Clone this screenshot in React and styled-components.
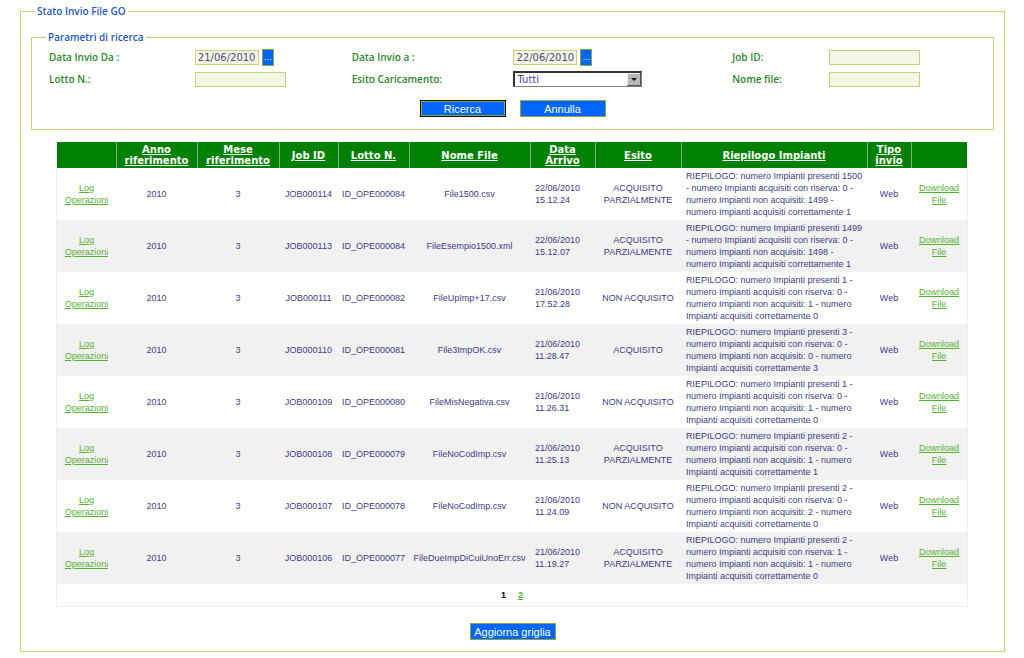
import styled, { createGlobalStyle } from "styled-components";

const GlobalStyle = createGlobalStyle`
  * {
    box-sizing: border-box;
  }
  body {
    margin: 0;
    background-color: #fffffe;
    font-family: "Liberation Sans", Arial, sans-serif;
    color: #3c3c86;
  }
`;

const Page = styled.main`
  padding: 4px 19px 0 20px;
`;

const Fieldset = styled.fieldset`
  margin: 0;
  min-width: 0;
  border: 1px solid #c9d173;
  padding: 0;
`;

const Legend = styled.legend`
  margin-left: 14px;
  padding: 0 2px;
  font-family: "Open Sans", sans-serif;
  font-size: 10px;
  font-weight: 600;
  line-height: 14px;
  color: #1f55c4;
`;

const Content = styled.div`
  padding: 12px 10px 11px;
`;

const SearchForm = styled.form`
  padding: 2px 17px 12px;
`;

const Filters = styled.div`
  display: grid;
  grid-template-columns: 146fr 157fr 162fr 219fr 97fr 147fr;
  grid-auto-rows: 22px;
  align-items: center;
`;

const Label = styled.label`
  font-family: "Open Sans", sans-serif;
  font-size: 10px;
  font-weight: 600;
  line-height: 14px;
  color: #2c862c;
`;

const Field = styled.div`
  display: flex;
  align-items: center;
  gap: 3px;
`;

const TextInput = styled.input`
  width: ${(props) => (props.$date ? "64px" : "91px")};
  height: 15px;
  padding: 0 2px;
  border: 1px solid #c9d173;
  border-radius: 0;
  background-color: #f5f5e6;
  font-family: "DejaVu Sans", Verdana, sans-serif;
  font-size: 10px;
  color: #4a4a78;
  outline: none;
`;

const Button = styled.button`
  width: 86px;
  height: 17px;
  padding: 0;
  border: 1px solid ${(props) => (props.$primary ? "#111111" : "#86a83c")};
  border-radius: 0;
  background-color: #0066ff;
  box-shadow: ${(props) => (props.$primary ? "inset 0 0 0 1px #86a83c" : "none")};
  font-family: "Liberation Sans", Arial, sans-serif;
  font-size: 11px;
  line-height: 14px;
  color: #ffffff;
  cursor: pointer;
`;

const DateButton = styled(Button)`
  width: 12px;
  font-size: 9px;
`;

const SelectBox = styled.div`
  position: relative;
  width: 129px;
  height: 16px;
`;

const Select = styled.select`
  display: block;
  width: 100%;
  height: 16px;
  padding: 0 16px 0 2px;
  appearance: none;
  border: 1px solid #808080;
  border-top: 2px solid #333333;
  border-left: 2px solid #333333;
  border-radius: 0;
  background-color: #ffffff;
  font-family: "DejaVu Sans", Verdana, sans-serif;
  font-size: 10px;
  color: #5a3c9a;
`;

const SelectArrow = styled.svg`
  position: absolute;
  top: 2px;
  right: 1px;
  pointer-events: none;
`;

const Buttons = styled.div`
  display: flex;
  justify-content: center;
  gap: 14px;
  margin-top: 10px;
`;

const Grid = styled.section`
  margin: 12px 26px 0 25px;
  border: 1px solid #eeeeee;
  border-top: none;
`;

const Table = styled.table`
  width: 100%;
  table-layout: fixed;
  border-collapse: collapse;
  font-size: 9px;
  line-height: 12px;
`;

const Th = styled.th`
  height: 26px;
  padding: 0 6px;
  background-color: #008000;
  border-left: 1px solid #7fae7f;
  font-family: "DejaVu Sans", Verdana, sans-serif;
  font-size: 10px;
  line-height: 11px;
  color: #ffffff;
  &:first-child {
    border-left: none;
  }
`;

const SortLink = styled.a`
  color: inherit;
  text-decoration: underline;
`;

const Tr = styled.tr`
  &:nth-child(even) {
    background-color: #f1f1f1;
  }
`;

const Td = styled.td`
  height: 52px;
  padding: 2px 5px;
  text-align: center;
`;

const CodeTd = styled(Td)`
  padding: 2px 0;
  white-space: nowrap;
`;

const TextTd = styled(Td)`
  padding: 2px 3px 2px 5px;
  text-align: left;
`;

const GreenLink = styled.a`
  color: #55b030;
  text-decoration: underline;
`;

const Pager = styled.nav`
  display: flex;
  justify-content: center;
  gap: 12px;
  padding: 5px 0;
  font-size: 9px;
  font-weight: bold;
  line-height: 12px;
`;

const CurrentPage = styled.span`
  color: #000000;
`;

const Footer = styled.div`
  display: flex;
  justify-content: center;
  margin-top: 16px;
`;

const columns = [
  { title: "", width: 59 },
  { title: "Anno riferimento", width: 81 },
  { title: "Mese riferimento", width: 82 },
  { title: "Job ID", width: 59 },
  { title: "Lotto N.", width: 71 },
  { title: "Nome File", width: 121 },
  { title: "Data Arrivo", width: 65 },
  { title: "Esito", width: 86 },
  { title: "Riepilogo Impianti", width: 186 },
  { title: "Tipo invio", width: 44 },
  { title: "", width: 56 },
];

const rows = [
  { job: "JOB000114", lotto: "ID_OPE000084", file: "File1500.csv", date: "22/06/2010 15.12.24", esito: "ACQUISITO PARZIALMENTE", counts: [1500, 0, 1499, 1] },
  { job: "JOB000113", lotto: "ID_OPE000084", file: "FileEsempio1500.xml", date: "22/06/2010 15.12.07", esito: "ACQUISITO PARZIALMENTE", counts: [1499, 0, 1498, 1] },
  { job: "JOB000111", lotto: "ID_OPE000082", file: "FileUpImp+17.csv", date: "21/06/2010 17.52.28", esito: "NON ACQUISITO", counts: [1, 0, 1, 0] },
  { job: "JOB000110", lotto: "ID_OPE000081", file: "File3ImpOK.csv", date: "21/06/2010 11.28.47", esito: "ACQUISITO", counts: [3, 0, 0, 3] },
  { job: "JOB000109", lotto: "ID_OPE000080", file: "FileMisNegativa.csv", date: "21/06/2010 11.26.31", esito: "NON ACQUISITO", counts: [1, 0, 1, 0] },
  { job: "JOB000108", lotto: "ID_OPE000079", file: "FileNoCodImp.csv", date: "21/06/2010 11.25.13", esito: "ACQUISITO PARZIALMENTE", counts: [2, 0, 1, 1] },
  { job: "JOB000107", lotto: "ID_OPE000078", file: "FileNoCodImp.csv", date: "21/06/2010 11.24.09", esito: "NON ACQUISITO", counts: [2, 0, 2, 0] },
  { job: "JOB000106", lotto: "ID_OPE000077", file: "FileDueImpDiCuiUnoErr.csv", date: "21/06/2010 11.19.27", esito: "ACQUISITO PARZIALMENTE", counts: [2, 1, 1, 0] },
];

const riepilogo = ([presenti, riserva, scartati, corretti]) =>
  `RIEPILOGO: numero Impianti presenti ${presenti} - numero Impianti acquisiti con riserva: ${riserva} - numero Impianti non acquisiti: ${scartati} - numero Impianti acquisiti correttamente ${corretti}`;

const SearchPanel = () => {
  return (
    <Fieldset>
      <Legend>Parametri di ricerca</Legend>
      <SearchForm>
        <Filters>
          <Label htmlFor="dataDa">Data Invio Da :</Label>
          <Field>
            <TextInput id="dataDa" $date defaultValue="21/06/2010" />
            <DateButton type="button" aria-label="Scegli data inizio">...</DateButton>
          </Field>
          <Label htmlFor="dataA">Data Invio a :</Label>
          <Field>
            <TextInput id="dataA" $date defaultValue="22/06/2010" />
            <DateButton type="button" aria-label="Scegli data fine">...</DateButton>
          </Field>
          <Label htmlFor="jobId">Job ID:</Label>
          <Field>
            <TextInput id="jobId" />
          </Field>
          <Label htmlFor="lotto">Lotto N.:</Label>
          <Field>
            <TextInput id="lotto" />
          </Field>
          <Label htmlFor="esito">Esito Caricamento:</Label>
          <SelectBox>
            <Select id="esito" defaultValue="Tutti">
              <option>Tutti</option>
              <option>ACQUISITO</option>
              <option>ACQUISITO PARZIALMENTE</option>
              <option>NON ACQUISITO</option>
            </Select>
            <SelectArrow width="14" height="13" viewBox="0 0 14 13">
              <rect width="14" height="13" fill="#555555" />
              <rect width="13" height="12" fill="#eeeeee" />
              <rect x="1" y="1" width="12" height="11" fill="#b8b8b8" />
              <path d="M4 5h6L7 8z" fill="#111111" />
            </SelectArrow>
          </SelectBox>
          <Label htmlFor="nomeFile">Nome file:</Label>
          <Field>
            <TextInput id="nomeFile" />
          </Field>
        </Filters>
        <Buttons>
          <Button type="button" $primary>Ricerca</Button>
          <Button type="reset">Annulla</Button>
        </Buttons>
      </SearchForm>
    </Fieldset>
  );
};

const FileTable = () => {
  return (
    <Grid>
      <Table>
        <colgroup>
          {columns.map((col, i) => (
            <col key={i} width={col.width} />
          ))}
        </colgroup>
        <thead>
          <tr>
            {columns.map((col, i) => (
              <Th key={i}>{col.title && <SortLink href="#">{col.title}</SortLink>}</Th>
            ))}
          </tr>
        </thead>
        <tbody>
          {rows.map((row) => (
            <Tr key={row.job}>
              <Td><GreenLink href="#">Log Operazioni</GreenLink></Td>
              <Td>2010</Td>
              <Td>3</Td>
              <CodeTd>{row.job}</CodeTd>
              <CodeTd>{row.lotto}</CodeTd>
              <CodeTd>{row.file}</CodeTd>
              <TextTd>{row.date}</TextTd>
              <Td>{row.esito}</Td>
              <TextTd>{riepilogo(row.counts)}</TextTd>
              <Td>Web</Td>
              <Td><GreenLink href="#">Download File</GreenLink></Td>
            </Tr>
          ))}
        </tbody>
      </Table>
      <Pager>
        <CurrentPage>1</CurrentPage>
        <GreenLink href="#">2</GreenLink>
      </Pager>
    </Grid>
  );
};

const App = () => {
  return (
    <Page>
      <GlobalStyle />
      <Fieldset>
        <Legend>Stato Invio File GO</Legend>
        <Content>
          <SearchPanel />
          <FileTable />
          <Footer>
            <Button type="button">Aggiorna griglia</Button>
          </Footer>
        </Content>
      </Fieldset>
    </Page>
  );
};

export default App;
